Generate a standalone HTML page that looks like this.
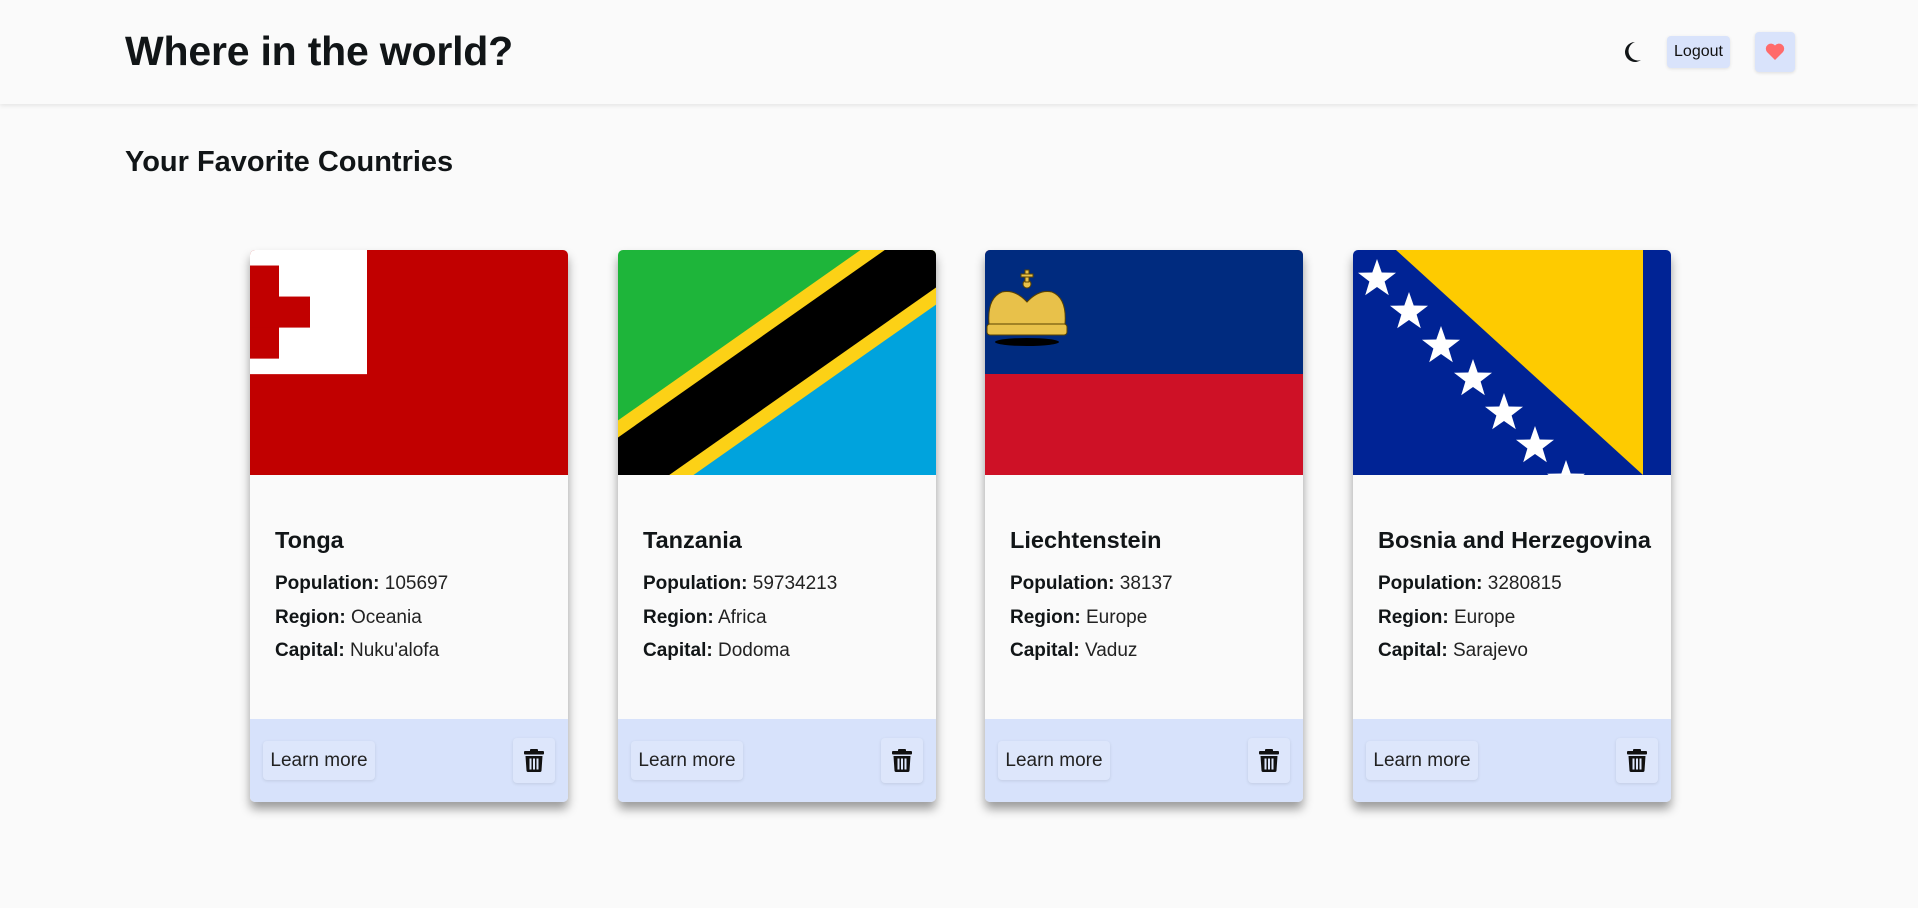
<!DOCTYPE html>
<html><head><meta charset="utf-8"><style>
*{box-sizing:border-box;margin:0;padding:0}
body{width:1918px;height:908px;background:#fafafa;font-family:"Liberation Sans",Arial,sans-serif;color:#111517;position:relative;overflow:hidden}
header{position:absolute;left:0;top:0;width:1918px;height:104px;background:#fafafa;box-shadow:0 2px 4px rgba(0,0,0,.08)}
h1{position:absolute;left:125px;top:28px;font-size:41px;font-weight:700;letter-spacing:-0.2px}
.moon{position:absolute;left:1622px;top:40px}
.logout{position:absolute;left:1667px;top:36px;width:63px;height:32px;background:#d9e3fb;border-radius:4px;box-shadow:0 1px 3px rgba(0,0,0,.1);font-size:16px;line-height:32px;text-align:center;color:#111}
.heart{position:absolute;left:1755px;top:32px;width:40px;height:40px;background:#d9e3fb;border-radius:4px;box-shadow:0 1px 3px rgba(0,0,0,.12)}
.heart svg{position:absolute;left:10px;top:11px}
h2{position:absolute;left:125px;top:146px;font-size:29px;font-weight:700}
.card{position:absolute;top:250px;width:318px;height:552px;background:#fafafa;border-radius:5px;overflow:hidden;box-shadow:0 7px 10px rgba(0,0,0,.38)}
.flag{position:absolute;left:0;top:0;width:318px;height:225px}
.name{position:absolute;left:25px;top:277px;font-size:23.5px;font-weight:700;white-space:nowrap}
.info{position:absolute;left:25px;font-size:19px;white-space:nowrap}
.info b{font-weight:700}
.info span{font-weight:400;color:#222}
.foot{position:absolute;left:0;top:469px;width:318px;height:83px;background:#d7e2fb}
.lm{position:absolute;left:13px;top:22px;width:112px;height:39px;background:#dde6fb;border-radius:4px;box-shadow:0 1px 3px rgba(0,0,0,.1);font-size:19px;line-height:39px;text-align:center;color:#222}
.tr{position:absolute;left:263px;top:19px;width:42px;height:45px;background:#dde6fb;border-radius:4px;box-shadow:0 1px 3px rgba(0,0,0,.1)}
.tr svg{position:absolute;left:11px;top:11px}
</style></head><body>
<header>
<h1>Where in the world?</h1>
<svg class="moon" width="20" height="24" viewBox="0 0 20 24"><path d="M13 2 A10 10 0 1 0 19 20 A8.5 8.5 0 1 1 13 2Z" fill="#111517"/></svg>
<div class="logout">Logout</div>
<div class="heart"><svg width="20" height="18" viewBox="0 0 20 18"><path d="M10 17 L2 9 A5 5 0 0 1 10 2.5 A5 5 0 0 1 18 9Z" fill="#ff6b6b"/></svg></div>
</header>
<h2>Your Favorite Countries</h2>

<div class="card" style="left:250px">
<svg class="flag" viewBox="0 0 318 203" preserveAspectRatio="none"><rect width="318" height="203" fill="#c10000"/><rect width="117" height="112" fill="#fff"/><rect x="0" y="14" width="29" height="84" fill="#c10000"/><rect x="0" y="42" width="60" height="28" fill="#c10000"/></svg>
<div class="name">Tonga</div>
<div class="info" style="top:323px"><b>Population:</b> <span>105697</span></div>
<div class="info" style="top:357px"><b>Region:</b> <span>Oceania</span></div>
<div class="info" style="top:390px"><b>Capital:</b> <span>Nuku'alofa</span></div>
<div class="foot"><div class="lm">Learn more</div><div class="tr"><svg width="20" height="23" viewBox="0 0 20 23"><rect x="0" y="2" width="20" height="3.5" rx="1" fill="#111"/><rect x="6" y="0" width="8" height="3" rx="1" fill="#111"/><path d="M1.5 7 H18.5 L17.5 21.5 Q17.4 23 16 23 H4 Q2.6 23 2.5 21.5Z" fill="#111"/><rect x="5.5" y="9.5" width="2" height="11" fill="#dde6fb"/><rect x="9" y="9.5" width="2" height="11" fill="#dde6fb"/><rect x="12.5" y="9.5" width="2" height="11" fill="#dde6fb"/></svg></div></div>
</div>

<div class="card" style="left:618px">
<svg class="flag" viewBox="0 0 318 203" preserveAspectRatio="none"><polygon points="0,0 318,0 0,203" fill="#1eb53a"/><polygon points="318,0 318,203 0,203" fill="#00a3dd"/><line x1="-20" y1="215" x2="338" y2="-12" stroke="#fcd116" stroke-width="82"/><line x1="-20" y1="215" x2="338" y2="-12" stroke="#000" stroke-width="56"/></svg>
<div class="name">Tanzania</div>
<div class="info" style="top:323px"><b>Population:</b> <span>59734213</span></div>
<div class="info" style="top:357px"><b>Region:</b> <span>Africa</span></div>
<div class="info" style="top:390px"><b>Capital:</b> <span>Dodoma</span></div>
<div class="foot"><div class="lm">Learn more</div><div class="tr"><svg width="20" height="23" viewBox="0 0 20 23"><rect x="0" y="2" width="20" height="3.5" rx="1" fill="#111"/><rect x="6" y="0" width="8" height="3" rx="1" fill="#111"/><path d="M1.5 7 H18.5 L17.5 21.5 Q17.4 23 16 23 H4 Q2.6 23 2.5 21.5Z" fill="#111"/><rect x="5.5" y="9.5" width="2" height="11" fill="#dde6fb"/><rect x="9" y="9.5" width="2" height="11" fill="#dde6fb"/><rect x="12.5" y="9.5" width="2" height="11" fill="#dde6fb"/></svg></div></div>
</div>

<div class="card" style="left:985px">
<svg class="flag" viewBox="0 0 318 225"><rect width="318" height="225" fill="#ce1126"/><rect width="318" height="124" fill="#002b7f"/>
<g fill="#e8c14a" stroke="#5a4300" stroke-width="1"><path d="M4 74 Q2 48 17 42 Q30 39 42 52 Q54 39 67 42 Q82 48 80 74Z"/><rect x="2" y="74" width="80" height="11" rx="3"/><circle cx="42" cy="34" r="4"/><rect x="40" y="20" width="4" height="12"/><rect x="36" y="24" width="12" height="3"/></g>
<ellipse cx="42" cy="92" rx="32" ry="4" fill="#000"/></svg>
<div class="name">Liechtenstein</div>
<div class="info" style="top:323px"><b>Population:</b> <span>38137</span></div>
<div class="info" style="top:357px"><b>Region:</b> <span>Europe</span></div>
<div class="info" style="top:390px"><b>Capital:</b> <span>Vaduz</span></div>
<div class="foot"><div class="lm">Learn more</div><div class="tr"><svg width="20" height="23" viewBox="0 0 20 23"><rect x="0" y="2" width="20" height="3.5" rx="1" fill="#111"/><rect x="6" y="0" width="8" height="3" rx="1" fill="#111"/><path d="M1.5 7 H18.5 L17.5 21.5 Q17.4 23 16 23 H4 Q2.6 23 2.5 21.5Z" fill="#111"/><rect x="5.5" y="9.5" width="2" height="11" fill="#dde6fb"/><rect x="9" y="9.5" width="2" height="11" fill="#dde6fb"/><rect x="12.5" y="9.5" width="2" height="11" fill="#dde6fb"/></svg></div></div>
</div>

<div class="card" style="left:1353px">
<svg class="flag" viewBox="0 0 318 225"><rect width="318" height="225" fill="#002395"/><polygon points="43,0 290,0 290,225" fill="#fecb00"/>
<defs><polygon id="st" points="0,-20 4.7,-6.5 19,-6.2 7.6,2.5 11.8,16.2 0,8 -11.8,16.2 -7.6,2.5 -19,-6.2 -4.7,-6.5" fill="#fff"/></defs>
<use href="#st" x="24" y="29"/><use href="#st" x="56" y="62"/><use href="#st" x="88" y="96"/><use href="#st" x="120" y="129"/><use href="#st" x="151" y="163"/><use href="#st" x="182" y="196"/><use href="#st" x="213" y="230"/></svg>
<div class="name">Bosnia and Herzegovina</div>
<div class="info" style="top:323px"><b>Population:</b> <span>3280815</span></div>
<div class="info" style="top:357px"><b>Region:</b> <span>Europe</span></div>
<div class="info" style="top:390px"><b>Capital:</b> <span>Sarajevo</span></div>
<div class="foot"><div class="lm">Learn more</div><div class="tr"><svg width="20" height="23" viewBox="0 0 20 23"><rect x="0" y="2" width="20" height="3.5" rx="1" fill="#111"/><rect x="6" y="0" width="8" height="3" rx="1" fill="#111"/><path d="M1.5 7 H18.5 L17.5 21.5 Q17.4 23 16 23 H4 Q2.6 23 2.5 21.5Z" fill="#111"/><rect x="5.5" y="9.5" width="2" height="11" fill="#dde6fb"/><rect x="9" y="9.5" width="2" height="11" fill="#dde6fb"/><rect x="12.5" y="9.5" width="2" height="11" fill="#dde6fb"/></svg></div></div>
</div>
</body></html>
